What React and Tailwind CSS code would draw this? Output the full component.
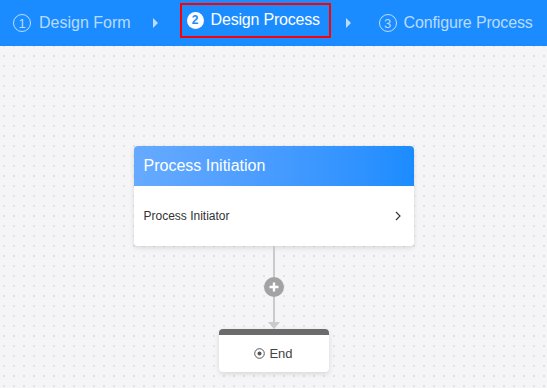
export default function App() {
    return (
        <div className="w-[547px] h-[388px] overflow-hidden flex flex-col font-['Liberation_Sans',Arial,sans-serif]">
            {/* step bar */}
            <div className="h-[46px] shrink-0 bg-[#1a8cff] flex items-center text-[16px]">
                <div className="flex items-center pl-[13px] text-white/70">
                    <span className="w-[18px] h-[18px] rounded-full border border-white/70 flex items-center justify-center text-[13px] leading-none">1</span>
                    <span className="ml-[8px]">Design Form</span>
                </div>
                <span className="ml-[22px] w-0 h-0 border-y-[5px] border-y-transparent border-l-[5px] border-l-white/70" />
                <div className="ml-[22px] h-[35px] w-[151px] border-2 border-[#ff0000] flex items-center pl-[5px] text-white -mt-[6px]">
                    <span className="w-[17px] h-[17px] rounded-full bg-white text-[#1a8cff] flex items-center justify-center text-[12px] font-bold leading-none">2</span>
                    <span className="ml-[7px] tracking-[-0.2px]">Design Process</span>
                </div>
                <span className="ml-[15px] w-0 h-0 border-y-[5px] border-y-transparent border-l-[5px] border-l-white/70" />
                <div className="ml-[28px] flex items-center text-white/70">
                    <span className="w-[18px] h-[18px] rounded-full border border-white/70 flex items-center justify-center text-[13px] leading-none">3</span>
                    <span className="ml-[7px] tracking-[-0.15px]">Configure Process</span>
                </div>
            </div>

            {/* canvas */}
            <div className="flex-1 bg-[#f5f5f7] bg-[radial-gradient(circle,#e2e2e2_1.2px,transparent_1.5px)] bg-[size:10px_10px] bg-[position:-1px_5px] flex flex-col items-center pt-[100px]">
                <div className="w-[280px] bg-white rounded-[4px] shadow-[0_2px_5px_rgba(0,0,0,0.12)] overflow-hidden">
                    <div className="h-[40px] bg-gradient-to-r from-[#66aaff] to-[#1a8cff] flex items-center px-[10px] text-white text-[16px]">
                        Process Initiation
                    </div>
                    <div className="h-[60px] flex items-center justify-between pl-[10px] pr-[13px] text-[12px] text-[#333]">
                        <span>Process Initiator</span>
                        <svg width="6" height="10" viewBox="0 0 6 10" fill="none">
                            <path d="M1 1l4 4-4 4" stroke="#333" strokeWidth="1.1" />
                        </svg>
                    </div>
                </div>

                <div className="flex flex-col items-center">
                    <div className="w-[2px] h-[31px] bg-[#cacaca]" />
                    <div className="w-[20px] h-[20px] rounded-full bg-[#a3a3a3] flex items-center justify-center">
                        <svg width="12" height="12" viewBox="0 0 12 12">
                            <path d="M6 1.5v9M1.5 6h9" stroke="#fff" strokeWidth="2.4" />
                        </svg>
                    </div>
                    <div className="w-[2px] h-[25px] bg-[#cacaca]" />
                    <span className="w-0 h-0 border-x-[6px] border-x-transparent border-t-[7px] border-t-[#cacaca]" />
                </div>

                <div className="w-[110px] h-[43px] bg-white rounded-[4px] overflow-hidden shadow-[0_2px_5px_rgba(0,0,0,0.12)] flex flex-col">
                    <div className="h-[6px] bg-[#6b6b6b]" />
                    <div className="flex-1 flex items-center justify-center gap-[4px] text-[13px] text-[#444]">
                        <svg width="11" height="11" viewBox="0 0 11 11">
                            <circle cx="5.5" cy="5.5" r="4.8" fill="none" stroke="#555" strokeWidth="1" />
                            <circle cx="5.5" cy="5.5" r="2" fill="#555" />
                        </svg>
                        <span>End</span>
                    </div>
                </div>
            </div>
        </div>
    );
}
